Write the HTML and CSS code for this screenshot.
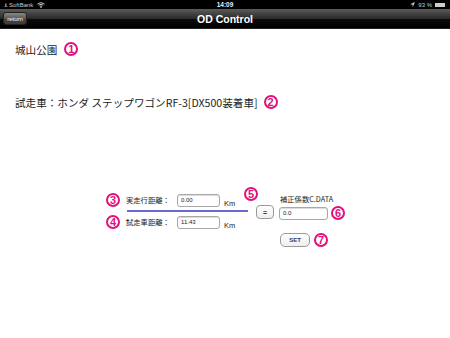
FILE: index.html
```html
<!DOCTYPE html>
<html lang="ja">
<head>
  <meta charset="UTF-8" />
  <title>OD Control</title>
  <link rel="stylesheet" href="styles.css">
</head>
<body>
  <div class="screen">
    <div class="statusbar">
      <div class="sb-left">
        <span class="signal">.ıl..</span> SoftBank
        <svg class="wifi" width="8" height="6" viewBox="0 0 8 6"><path d="M0.5 2 Q4 -0.8 7.5 2 M1.8 3.2 Q4 1.4 6.2 3.2 M3 4.4 Q4 3.6 5 4.4" stroke="#ddd" stroke-width="0.9" fill="none"/><circle cx="4" cy="5.4" r="0.6" fill="#ddd"/></svg>
      </div>
      <div class="sb-time">14:09</div>
      <div class="sb-right">
        <svg width="5" height="5" viewBox="0 0 5 5"><path d="M5 0 L0 2.2 L2.4 2.6 L2.8 5 Z" fill="#ccc"/></svg>
        <span>93 %</span>
        <span class="battery"><span class="battery-fill"></span></span>
      </div>
    </div>

    <div class="navbar">
      <button class="back-btn">return</button>
      <h1 class="nav-title">OD Control</h1>
    </div>

    <div class="content">
      <p class="line line-first">城山公園 <span class="mark">1</span></p>
      <p class="line line-second">試走車：ホンダ ステップワゴンRF-3[DX500装着車] <span class="mark">2</span></p>

      <div class="calc">
        <div class="calc-left">
          <div class="row">
            <span class="mark">3</span>
            <span class="label">実走行距離：</span>
            <input class="field" type="text" value="0.00">
            <span class="unit unit-top">Km</span>
          </div>
          <div class="divider"></div>
          <div class="row">
            <span class="mark">4</span>
            <span class="label">試走車距離：</span>
            <input class="field" type="text" value="11.43">
            <span class="unit">Km</span>
          </div>
        </div>

        <div class="calc-mid">
          <span class="mark">5</span>
          <button class="btn eq-btn">=</button>
        </div>

        <div class="calc-right">
          <div class="result-label">補正係数C.DATA</div>
          <div class="result-row">
            <input class="field field-wide" type="text" value="0.0">
            <span class="mark">6</span>
          </div>
          <div class="set-row">
            <button class="btn set-btn">SET</button>
            <span class="mark">7</span>
          </div>
        </div>
      </div>
    </div>
  </div>
</body>
</html>
```

FILE: styles.css
```css
html, body {
  margin: 0;
  padding: 0;
  background: #fff;
}
.screen {
  width: 450px;
  height: 338px;
  position: relative;
  font-family: "Noto Sans CJK JP", "Liberation Sans", sans-serif;
  color: #222;
  overflow: hidden;
}

/* status bar */
.statusbar {
  height: 9px;
  background: #000;
  color: #ccc;
  font-family: "Liberation Sans", sans-serif;
  font-size: 6px;
  display: flex;
  align-items: center;
  justify-content: space-between;
  padding: 0 5px 0 4px;
  position: relative;
}
.sb-left {
  display: flex;
  align-items: center;
  gap: 2px;
}
.signal {
  letter-spacing: -1px;
}
.wifi {
  margin-left: 2px;
}
.sb-time {
  position: absolute;
  left: 0;
  right: 0;
  text-align: center;
  color: #eee;
  font-weight: bold;
  font-size: 6.5px;
}
.sb-right {
  display: flex;
  align-items: center;
  gap: 3px;
}
.battery {
  width: 10px;
  height: 4px;
  border: 1px solid #ccc;
  box-sizing: border-box;
  display: inline-block;
  position: relative;
}
.battery-fill {
  display: block;
  width: 100%;
  height: 100%;
  background: #ccc;
}

/* navbar */
.navbar {
  height: 19px;
  background: linear-gradient(#5c5c5c, #2a2a2a 50%, #0c0c0c 51%, #000);
  display: flex;
  align-items: center;
  justify-content: center;
  position: relative;
  border-bottom: 1px solid #222;
}
.back-btn {
  position: absolute;
  left: 3px;
  top: 3px;
  width: 24px;
  height: 13px;
  padding: 0;
  font-family: "Liberation Sans", sans-serif;
  font-size: 6px;
  color: #fff;
  background: linear-gradient(#888, #5a5a5a 50%, #444 51%, #3c3c3c);
  border: 1px solid #222;
  border-radius: 3px;
}
.nav-title {
  margin: 0;
  color: #fff;
  font-family: "Liberation Sans", sans-serif;
  font-size: 10.5px;
  font-weight: bold;
}

/* content */
.content {
  padding-left: 15px;
}
.line {
  margin: 0;
  font-size: 10.6px;
  display: flex;
  align-items: center;
  gap: 7px;
  height: 16px;
}
.line-first {
  margin-top: 12px;
}
.line-second {
  margin-top: 37px;
  gap: 6px;
}
.mark {
  display: inline-flex;
  align-items: center;
  justify-content: center;
  width: 14px;
  height: 14px;
  box-sizing: border-box;
  border: 2px solid #e2117b;
  border-radius: 50%;
  color: #e2117b;
  font-family: "Liberation Sans", sans-serif;
  font-weight: bold;
  font-size: 11px;
  line-height: 1;
  flex: none;
}

/* calculator */
.calc {
  display: flex;
  margin-top: 77px;
  margin-left: 91px;
}
.calc-left {
  width: 138px;
  padding-top: 6px;
}
.row {
  display: flex;
  align-items: center;
  height: 14px;
}
.label {
  font-size: 7.3px;
  margin-left: 6px;
  width: 51px;
}
.field {
  width: 43px;
  height: 13px;
  box-sizing: border-box;
  border: 1px solid #a8a8a8;
  border-radius: 3px;
  box-shadow: inset 0 1px 1px rgba(0,0,0,0.15);
  font-family: "Liberation Sans", sans-serif;
  font-size: 6px;
  padding: 0 3px;
  color: #222;
  background: #fff;
}
.field-wide {
  width: 49px;
}
.unit {
  font-family: "Liberation Sans", sans-serif;
  font-size: 7.5px;
  margin-left: 4px;
  margin-top: 7px;
}
.divider {
  height: 2px;
  background: #6a6ad6;
  width: 121px;
  margin: 3px 0 3px 21px;
}

.calc-mid {
  display: flex;
  flex-direction: column;
}
.btn {
  font-family: "Liberation Sans", sans-serif;
  background: linear-gradient(#fff, #eee);
  border: 1px solid #9a9a9a;
  border-radius: 4px;
  color: #2c3e66;
  font-weight: bold;
  padding: 0;
}
.eq-btn {
  width: 18px;
  height: 14px;
  margin-left: 12px;
  margin-top: 4px;
  font-size: 7px;
}

.calc-right {
  margin-left: 5px;
  padding-top: 7px;
}
.result-label {
  font-size: 7.3px;
  margin-left: 1px;
  height: 12px;
}
.result-row {
  display: flex;
  align-items: center;
  gap: 3px;
}
.set-row {
  display: flex;
  align-items: center;
  gap: 4px;
  margin-top: 13px;
  margin-left: 1px;
}
.set-btn {
  width: 30px;
  height: 14px;
  font-size: 6px;
  border-radius: 5px;
}
```
